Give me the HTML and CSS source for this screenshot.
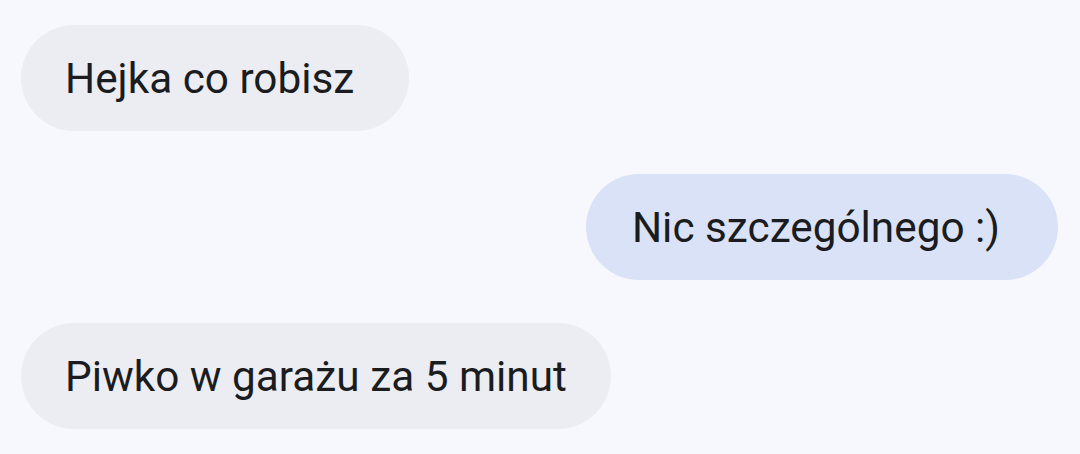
FILE: index.html
```html
<!DOCTYPE html>
<html lang="pl">
<head>
<meta charset="utf-8">
<link rel="stylesheet" href="styles.css">
</head>
<body>
<div class="chat">
  <div class="row in"><div class="bubble wide">Hejka co robisz</div></div>
  <div class="row out"><div class="bubble wide">Nic szczególnego :)</div></div>
  <div class="row in"><div class="bubble">Piwko w garażu za 5 minut</div></div>
</div>
</body>
</html>
```
FILE: styles.css
```css
html, body {
  margin: 0;
  padding: 0;
  background: #f7f8fd;
}
body {
  width: 1080px;
  height: 454px;
  overflow: hidden;
  font-family: Roboto, "Noto Sans", sans-serif;
  color: #1b1c20;
}
.chat {
  display: flex;
  flex-direction: column;
  gap: 43px;
  padding: 25px 22px 0 21px;
}
.row {
  display: flex;
}
.row.in { justify-content: flex-start; }
.row.out { justify-content: flex-end; }
.bubble {
  height: 106px;
  box-sizing: border-box;
  display: flex;
  align-items: center;
  padding: 0 44px 0 44px;
  border-radius: 53px;
  font-size: 42.3px;
  background: #ecedf2;
}
.bubble.wide {
  padding-right: 55px;
}
.row.out .bubble {
  background: #dae2f8;
  padding-left: 46px;
  padding-right: 58px;
}
```
